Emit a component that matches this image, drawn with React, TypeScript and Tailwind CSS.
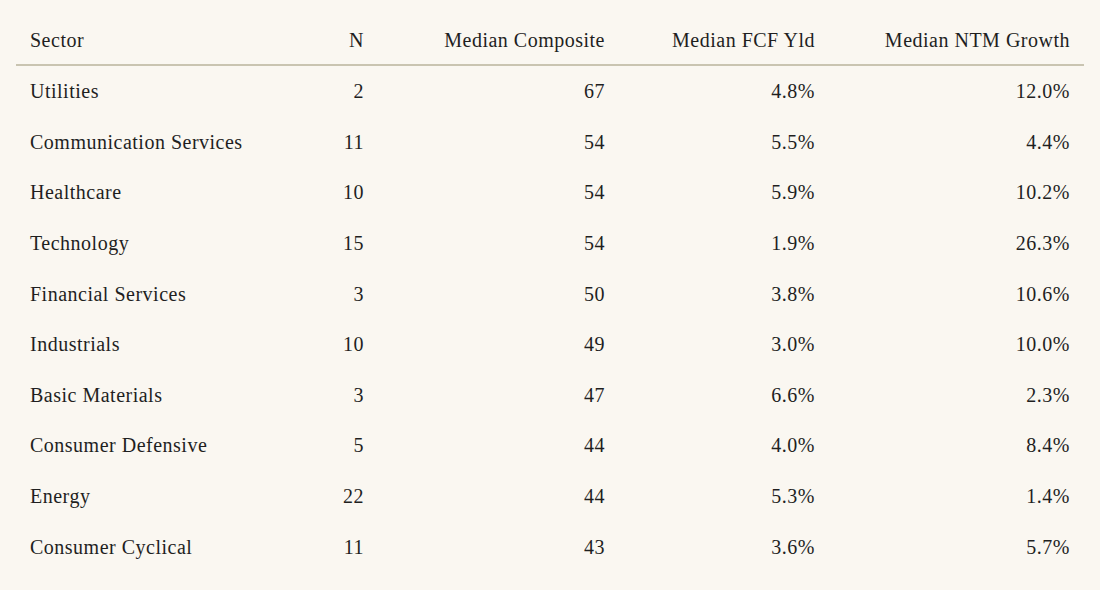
const ROWS: [string, string, string, string, string][] = [
  ['Utilities', '2', '67', '4.8%', '12.0%'],
  ['Communication Services', '11', '54', '5.5%', '4.4%'],
  ['Healthcare', '10', '54', '5.9%', '10.2%'],
  ['Technology', '15', '54', '1.9%', '26.3%'],
  ['Financial Services', '3', '50', '3.8%', '10.6%'],
  ['Industrials', '10', '49', '3.0%', '10.0%'],
  ['Basic Materials', '3', '47', '6.6%', '2.3%'],
  ['Consumer Defensive', '5', '44', '4.0%', '8.4%'],
  ['Energy', '22', '44', '5.3%', '1.4%'],
  ['Consumer Cyclical', '11', '43', '3.6%', '5.7%'],
];

const HEADERS = ['Sector', 'N', 'Median Composite', 'Median FCF Yld', 'Median NTM Growth'];

const COLS = 'grid grid-cols-[234px_128px_241px_210px_255px]';

export default function App() {
  return (
    <div className="min-h-[590px] w-[1100px] bg-[#faf7f1] px-4 pt-[15px] font-['Liberation_Serif',serif] text-[20px] tracking-[0.5px] text-[#1f1f1f]">
      <div className={`${COLS} h-[51px] items-center border-b-2 border-[#c9c4b1]`}>
        {HEADERS.map((h, i) => (
          <div key={h} className={i === 0 ? 'pl-[14px]' : 'pr-[14px] text-right'}>
            {h}
          </div>
        ))}
      </div>
      {ROWS.map((row) => (
        <div key={row[0]} className={`${COLS} h-[50.6px] items-center`}>
          {row.map((cell, i) => (
            <div key={i} className={i === 0 ? 'pl-[14px]' : 'pr-[14px] text-right'}>
              {cell}
            </div>
          ))}
        </div>
      ))}
    </div>
  );
}
